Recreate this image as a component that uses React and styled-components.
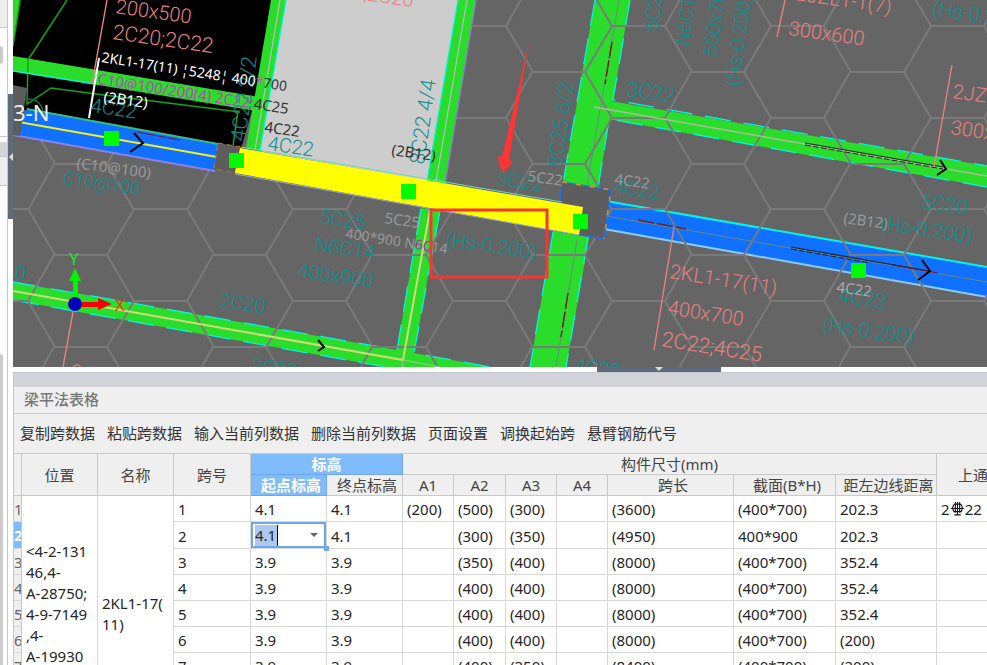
import React from 'react';
import styled, { createGlobalStyle } from 'styled-components';

const Global = createGlobalStyle`
  * { box-sizing: border-box; }
  html, body, #root { height: 100%; }
  body {
    margin: 0;
    overflow: hidden;
    background: #fff;
    color: #262626;
    font: 15px/21px 'Noto Sans', 'Noto Sans CJK SC', sans-serif;
  }
`;

const Page = styled.div`
  display: grid;
  grid-template-columns: 13px minmax(0, 1fr);
  height: 100vh;
  overflow: hidden;
`;

const Rail = styled.aside`
  display: grid;
  grid-template-columns: 8px 5px;
`;

const RailPane = styled.div`
  display: flex;
  flex-direction: column;
  border-right: 1px solid #c4c8cc;
`;

const RailBlock = styled.div`
  height: ${(p) => p.$h}px;
  background: ${(p) => p.$bg || '#fff'};
  border-bottom: ${(p) => (p.$line ? '1px solid #c4c6ca' : '0')};
`;

const RailThumb = styled.div`
  width: 3px;
  height: ${(p) => p.$h}px;
  flex: ${(p) => (p.$grow ? '1' : 'none')};
  background: #cbcbcb;
  border-radius: 0 3px 0 0;
  border-bottom-right-radius: ${(p) => (p.$grow ? 0 : 3)}px;
`;

const RailGutter = styled.div`
  padding-top: 94px;
`;

const RailToggle = styled.button`
  display: flex;
  align-items: center;
  width: 5px;
  height: 125px;
  padding: 0;
  border: 0;
  background: #5f6b78;
`;

const Main = styled.main`
  display: flex;
  flex-direction: column;
  min-width: 0;
`;

const Viewport = styled.section`
  height: 367px;
  flex: none;
  background: #656565;
  overflow: hidden;
`;

const Drawing = styled.svg`
  display: block;
  width: 100%;
  height: 100%;
`;

const Splitter = styled.div`
  display: flex;
  justify-content: center;
  height: 5px;
  flex: none;
  padding-left: 318px;
`;

const SplitterToggle = styled.button`
  display: flex;
  justify-content: center;
  width: 124px;
  padding: 0;
  border: 0;
  background: #5f6b78;
`;

const Panel = styled.section`
  flex: 1;
  min-height: 0;
  overflow: hidden;
  background: #efefef;
  border-left: 1px solid #c4c8cc;
`;

const PanelStrip = styled.div`
  height: 15px;
  background: #d3d4da;
  border-top: 1px solid #c4c8cc;
`;

const PanelTitle = styled.h2`
  margin: 0;
  height: 27px;
  padding: 2px 10px;
  border-bottom: 1px solid #c8ccd0;
  color: #777;
  font-size: 15px;
  font-weight: 500;
`;

const Toolbar = styled.div`
  display: flex;
  align-items: center;
  gap: 12px;
  height: 39px;
  padding: 0 6px;
`;

const ToolButton = styled.button`
  padding: 0;
  border: 0;
  background: none;
  color: #333;
  font: inherit;
  white-space: nowrap;
`;

const Grid = styled.table`
  width: 1026px;
  min-width: 100%;
  table-layout: fixed;
  border-collapse: separate;
  border-spacing: 0;
  border-top: 1px solid #c9c9c9;
  background: #fff;
`;

const Col = styled.col`
  width: ${(p) => p.$w}px;
`;

const Head = styled.th`
  height: 21px;
  padding: 0;
  border-right: 1px solid ${(p) => (p.$active ? '#6fa8ea' : '#c9c9c9')};
  border-bottom: 1px solid ${(p) => (p.$active ? '#6fa8ea' : '#c9c9c9')};
  background: ${(p) => (p.$active ? '#80bbfb' : '#efefef')};
  color: ${(p) => (p.$active ? '#fff' : '#444')};
  font-weight: ${(p) => (p.$active ? 700 : 400)};
  line-height: 20px;
  padding-left: ${(p) => (p.$right ? 5 : 0)}px;
  white-space: nowrap;
`;

const RowHead = styled.th`
  height: 26px;
  padding: 1px 0 0;
  overflow: hidden;
  border-right: 1px solid #c9c9c9;
  border-bottom: 1px solid #d8d8d8;
  background: ${(p) => (p.$active ? '#80bbfb' : '#efefef')};
  color: ${(p) => (p.$active ? '#fff' : '#666')};
  font-weight: ${(p) => (p.$active ? 700 : 400)};
  text-align: left;
`;

const Cell = styled.td`
  height: 26px;
  padding: 2px 4px 0;
  border-right: 1px solid #d8d8d8;
  border-bottom: 1px solid #d8d8d8;
  white-space: ${(p) => (p.$wrap ? 'pre-line' : 'nowrap')};
`;

const EditCell = styled(Cell)`
  position: relative;
  padding: 0;
`;

const Editor = styled.div`
  display: flex;
  align-items: center;
  justify-content: space-between;
  height: 26px;
  padding: 0 6px 0 2px;
  border: 2px solid #6fa8ea;
`;

const EditorInput = styled.input`
  width: 23px;
  height: 21px;
  padding: 0;
  border: 0;
  border-right: 1px solid #000;
  border-radius: 0;
  outline: 0;
  background: #adc9ef;
  color: inherit;
  font: inherit;
`;

const EditorButton = styled.button`
  display: flex;
  padding: 0;
  border: 0;
  background: none;
`;

const FillHandle = styled.span`
  position: absolute;
  right: -3px;
  bottom: -3px;
  width: 5px;
  height: 5px;
  background: #6fa8ea;
`;

const Rebar = styled.span`
  display: inline-flex;
  align-items: center;
  line-height: 19px;
`;

const TEAL = '#0f8f8f';
const SALMON = '#e98080';
const GREEN = '#2bdd2b';
const CYAN = '#00f5e4';

function hexPath() {
  let d = '';
  for (let c = -1; c < 7; c += 1) {
    for (let r = -1; r < 5; r += 1) {
      const x = Math.round(54 + c * 159.3);
      const y = Math.round(72 + r * 91.6);
      d += `M${x} ${y}h53l27-46h53l27 46M${x + 53} ${y}l27 46M${x + 133} ${y + 46}l26-46`;
    }
  }
  return d;
}

// [text, x, y, rotation, fill, size]
const notes = [
  ['200x500', 115, 13, 8, SALMON, 20],
  ['2C20;2C22', 112, 39, 8, SALMON, 21],
  ['300x600', 788, 35, 8, SALMON, 20],
  ['2JZL1-1(7)', 795, 0, 8, SALMON, 20],
  ['2JZL1', 952, 98, 8, SALMON, 20],
  ['300x600', 950, 134, 8, SALMON, 20],
  ['2KL1-17(11)', 669, 278, 9, SALMON, 20],
  ['400x700', 667, 314, 9, SALMON, 20],
  ['2C22;4C25', 661, 346, 9, SALMON, 21],
  [';2C20', 363, 0, 8, SALMON, 20],
  ['2JZ', 70, 378, 8, SALMON, 20],
  ['4C22', 90, 112, 8, TEAL, 20],
  ['4C22', 267, 150, 8, TEAL, 20],
  ['C10@100', 62, 184, 8, TEAL, 18],
  ['4C22 2/2', 245, 142, -82, TEAL, 21],
  ['8C22 4/4', 424, 165, -82, TEAL, 21],
  ['8C25 6/2', 562, 168, -82, TEAL, 21],
  ['5C22', 496, 185, 8, TEAL, 20],
  ['3C22', 626, 96, 8, TEAL, 21],
  ['4C22', 613, 193, 8, TEAL, 20],
  ['6C25', 658, 32, -82, TEAL, 20],
  ['N6C14', 689, 47, -82, TEAL, 20],
  ['500x700', 717, 57, -82, TEAL, 20],
  ['(Hs-0.200)', 739, 87, -82, TEAL, 20],
  ['(Hs-0.200)', 932, 15, 8, TEAL, 20],
  ['5C20', 921, 208, 8, TEAL, 20],
  ['(Hs-0.200)', 880, 230, 8, TEAL, 20],
  ['4C22', 838, 302, 8, TEAL, 21],
  ['(Hs-0.200)', 822, 331, 8, TEAL, 20],
  ['5C25', 319, 223, 8, TEAL, 20],
  ['N6C14', 314, 251, 8, TEAL, 20],
  ['400x900', 297, 277, 8, TEAL, 20],
  ['(Hs-0.200)', 445, 246, 8, TEAL, 20],
  ['2C20', 219, 307, 8, TEAL, 20],
  ['2C20', 251, 372, 8, TEAL, 20],
  ['4C22', 574, 372, 8, TEAL, 20],
  ['0', 14, 279, 8, TEAL, 20],
];

const labels = [
  ['(C10@100)', 76, 168, 8, '#999'],
  ['5C22', 527, 181, 8, '#999'],
  ['4C22', 614, 184, 8, '#999'],
  ['(2B12)', 843, 223, 8, '#999'],
  ['4C22', 836, 292, 8, '#aaa'],
  ['5C25', 384, 223, 8, '#999'],
  ['(2B12)', 391, 155, 8, '#333'],
  ['(2B12)', 103, 102, 8, '#fff'],
  ['4C22', 264, 132, 8, '#333'],
];

const grips = [[104, 131], [229, 153], [401, 184], [573, 214], [851, 263]];

function Note({ data, size }) {
  const [text, x, y, rot, fill, own] = data;
  return (
    <text transform={`translate(${x} ${y}) rotate(${rot})`} fill={fill} fontSize={own || size}>
      {text}
    </text>
  );
}

function Plan() {
  return (
    <Drawing viewBox="13 0 974 367" preserveAspectRatio="xMinYMin slice" role="img" aria-label="梁平面图">
      <g>
        <path d="M610 101L987 166V187L608 119zM13 282L397 350 421 208 440 211 414 353 490 367H386L13 300z" fill={GREEN} />
        <path d="M595 0H630L598 188 566 367H530L553 232 563 183z" fill={GREEN} />
        <path d="M606 201L987 267V297L604 229z" fill="#1070ff" />
        <g fill="none" stroke={CYAN} strokeWidth="1.3">
          <path d="M595 0L563 183M553 232L530 367M588 238L566 367M630 0L613 100 987 166M598 188L609 119 987 187M13 282L397 350 421 208M440 211L414 353 490 367M13 300L386 367" strokeDasharray="26 13" />
          <path d="M606 201L987 267" strokeWidth="2" />
        </g>
        <path d="M604 229L987 297" stroke="#8ecbff" strokeWidth="2" />
        <path d={hexPath()} fill="none" stroke="#7a7a7a" strokeWidth="2" />
      </g>
      <path d="M13 0H283L241 149 13 108z" fill="#000" />
      <path d="M286 0H458L428 181 259 151z" fill="#cdcdcd" />
      <g fill={GREEN}>
        <path d="M13 56L265 98 262 112 13 71z" />
        <path d="M271 0H286L260 151 246 148z" />
        <path d="M458 0H476L445 184 427 181z" />
        <path d="M13 0H20L13 46z" />
      </g>
      <path d="M20 0L13 46M67 0L28 60 27 104 51 88 96 94 240 112M238 110L233 146" fill="none" stroke="#14a414" strokeWidth="1.5" />
      <circle cx="29" cy="113" r="14" fill="none" stroke="#126d25" strokeWidth="1.5" />
      <path d="M13 71L95 84M286 0L260 151M458 0L427 181" stroke={CYAN} strokeWidth="1.3" />
      <path d="M280 0L255 150M467 0L436 182" stroke="#bdbdbd" strokeWidth="1.2" />
      <path d="M476 0L445 184" stroke="#8f79ce" strokeWidth="1.4" />
      <path d="M27 109L218 144 215 170 13 135z" fill="#1070ff" />
      <path d="M27 109L218 144" stroke="#35bd84" strokeWidth="2" />
      <path d="M13 135L215 171" stroke="#8a82ec" strokeWidth="2" />
      <path d="M13 121L217 157" stroke="#f1ed28" strokeWidth="2" />
      <path d="M137 132L180 140" stroke="#69105b" />
      <path d="M134 133L143 143 130 152" fill="none" stroke="#000" strokeWidth="2" />
      <path d="M13 85L27 88 20 136 13 135z" fill="#5d5d5d" />
      <path d="M218 143L241 147 235 173 214 169z" fill="#5d5d5d" stroke="#be704c" strokeDasharray="5 4" />
      <path d="M562 182L611 190 604 239 556 231z" fill="#5d5d5d" stroke="#216ee5" strokeWidth="1.5" />
      <path d="M562 182L611 190 604 239" fill="none" stroke="#e38b36" strokeWidth="1.5" strokeDasharray="5 9" />
      <path d="M240 148L583 207 579 235 235 173z" fill="#ff0" />
      <path d="M241 147L562 202" stroke="#65d7cf" />
      <path d="M235 174L579 235" stroke="#98a7df" />
      <path d="M13 291L403 360 430 210" fill="none" stroke="#d5d878" strokeWidth="2" />
      <path d="M403 360L440 367M403 360L402 367" stroke="#aebf93" />
      <path d="M619 0L587 185M577 240L556 367M606 216L987 282" stroke="#6c8880" />
      <path d="M594 107L987 176" stroke="#b1b99f" strokeWidth="1.5" />
      <path d="M612 42L605 84M568 293L561 337M638 220L686 229" stroke="#761f20" strokeWidth="1.5" strokeDasharray="16 3" />
      <path d="M805 143L943 167M791 247L929 271" stroke="#222" strokeWidth="1.2" />
      <path d="M805 145L943 169M791 249L870 263" stroke="#222" strokeDasharray="6 2" />
      <path d="M892 265L938 273" stroke="#6b1425" />
      <path d="M940 160L946 169 937 175M922 260L930 271 918 280M318 340L324 347 318 351" fill="none" stroke="#000" strokeWidth="2" />
      <path d="M107 0L92 84M785 0L777 37M952 65L934 167M674 227L654 350M73 312L63 367" stroke={SALMON} strokeWidth="1.4" />
      <path d="M99 58L89 118" stroke="#fff" strokeWidth="2" />
      <g fontFamily="Roboto, 'Open Sans', sans-serif" fontWeight="300">
        {notes.map((n) => <Note key={`${n[0]}-${n[1]}-${n[2]}`} data={n} />)}
      </g>
      <g fontFamily="'Noto Sans', sans-serif">
        {labels.map((n) => <Note key={`${n[0]}-${n[1]}`} data={n} size={15} />)}
        <text transform="translate(97 84) rotate(9)" fontSize="15" fill="#bd43bd">
          C10@100/200(4) 2C22;<tspan fill="#333">4C25</tspan>
        </text>
        <text transform="translate(101 62) rotate(9)" fontSize="14" fill="#fff">
          2KL1-17(11) ¦5248¦ 400<tspan fill="#d04bd0">*</tspan><tspan fill="#333">700</tspan>
        </text>
        <text transform="translate(345 238) rotate(9)" fontSize="14" fill="#999">
          400*900 N<tspan fill="#c01cc0">6C</tspan>14
        </text>
        <text x="13" y="121" fontSize="22" fill="#eee">3-N</text>
        <text x="69" y="265" fontSize="17" fill="#22e322">Y</text>
        <text x="115" y="311" fontSize="17" fill="#ff3500">X</text>
      </g>
      <path d="M73 298V281H69L75 268 81 281H78V298z" fill="#00f300" />
      <path d="M82 302H98V298L112 304 98 310V307H82z" fill="#f40000" />
      <circle cx="75" cy="304" r="7" fill="#0000ba" />
      {grips.map(([x, y]) => <rect key={x} x={x} y={y} width="15" height="15" fill="#00fa00" />)}
      <path d="M529 42L509 160 513 161 503 174 497 156 502 157z" fill="#ff3535" />
      <rect x="431" y="210" width="116" height="67" fill="none" stroke="#fa3434" strokeWidth="3" />
    </Drawing>
  );
}

const columns = [8, 76, 76, 77, 76, 76, 51, 52, 51, 51, 126, 102, 101, 103];
const actions = ['复制跨数据', '粘贴跨数据', '输入当前列数据', '删除当前列数据', '页面设置', '调换起始跨', '悬臂钢筋代号'];

const rows = [
  ['4.1', '4.1', '(200)', '(500)', '(300)', '', '(3600)', '(400*700)', '202.3'],
  ['4.1', '4.1', '', '(300)', '(350)', '', '(4950)', '400*900', '202.3'],
  ['3.9', '3.9', '', '(350)', '(400)', '', '(8000)', '(400*700)', '352.4'],
  ['3.9', '3.9', '', '(400)', '(400)', '', '(8000)', '(400*700)', '352.4'],
  ['3.9', '3.9', '', '(400)', '(400)', '', '(8000)', '(400*700)', '352.4'],
  ['3.9', '3.9', '', '(400)', '(400)', '', '(8000)', '(400*700)', '(200)'],
  ['3.9', '3.9', '', '(400)', '(350)', '', '(8400)', '(400*700)', '(200)'],
  ['', '', '', '', '', '', '', '', ''],
  ['', '', '', '', '', '', '', '', ''],
];

function SpanEditor() {
  return (
    <EditCell>
      <Editor>
        <EditorInput aria-label="起点标高" defaultValue="4.1" />
        <EditorButton aria-label="展开">
          <svg width="8" height="5" viewBox="0 0 8 5"><path d="M0 0H8L4 4z" fill="#666" /></svg>
        </EditorButton>
      </Editor>
      <FillHandle />
    </EditCell>
  );
}

function SpanTable() {
  return (
    <Grid>
      <colgroup>{columns.map((w, i) => <Col key={i} $w={w} />)}</colgroup>
      <thead>
        <tr>
          <Head rowSpan={2} />
          <Head rowSpan={2}>位置</Head>
          <Head rowSpan={2}>名称</Head>
          <Head rowSpan={2}>跨号</Head>
          <Head colSpan={2} $active>标高</Head>
          <Head colSpan={7}>构件尺寸(mm)</Head>
          <Head rowSpan={2}>上通长筋</Head>
        </tr>
        <tr>
          <Head $active $right>起点标高</Head>
          <Head $right>终点标高</Head>
          <Head>A1</Head>
          <Head>A2</Head>
          <Head>A3</Head>
          <Head>A4</Head>
          <Head $right>跨长</Head>
          <Head $right>截面(B*H)</Head>
          <Head $right>距左边线距离</Head>
        </tr>
      </thead>
      <tbody>
        {rows.map((row, r) => (
          <tr key={r}>
            <RowHead $active={r === 1}>{r + 1}</RowHead>
            {r === 0 && <Cell rowSpan={9} $wrap>{' <4-2-131\n46,4-\nA-28750;\n4-9-7149\n,4-\nA-19930\n>'}</Cell>}
            {r === 0 && <Cell rowSpan={9} $wrap>{'2KL1-17(\n11)'}</Cell>}
            <Cell>{r + 1}</Cell>
            {row.map((value, c) => (r === 1 && c === 0 ? <SpanEditor key={c} /> : <Cell key={c}>{value}</Cell>))}
            <Cell>
              {r === 0 && (
                <Rebar>
                  2
                  <svg width="15" height="15" viewBox="0 0 14 14" aria-label="三级钢" fill="none" stroke="#111">
                    <path d="M4 2Q1 6 4 9M10 2Q13 6 10 9M4 2H10M5 0V10M7 0V12M9 0V10M1 6H13M3 9H11M4 12H10" />
                  </svg>
                  22
                </Rebar>
              )}
            </Cell>
          </tr>
        ))}
      </tbody>
    </Grid>
  );
}

export default function App() {
  return (
    <>
      <Global />
      <Page>
        <Rail>
          <RailPane>
            <RailBlock $h={28} $bg="#eee" $line />
            <RailBlock $h={18} />
            <RailThumb $h={18} />
            <RailBlock $h={73} $line />
            <RailBlock $h={5} />
            <RailBlock $h={15} $bg="#d3d4da" $line />
            <RailBlock $h={29} $bg="#eee" $line />
            <RailBlock $h={168} />
            <RailThumb $grow />
          </RailPane>
          <RailGutter>
            <RailToggle aria-label="收起侧栏">
              <svg width="5" height="8" viewBox="0 0 5 8"><path d="M1 4L5 0V8z" fill="#ddd" /></svg>
            </RailToggle>
          </RailGutter>
        </Rail>
        <Main>
          <Viewport><Plan /></Viewport>
          <Splitter>
            <SplitterToggle aria-label="收起表格">
              <svg width="8" height="4" viewBox="0 0 8 4"><path d="M0 0H8L4 4z" fill="#ddd" /></svg>
            </SplitterToggle>
          </Splitter>
          <Panel>
            <PanelStrip />
            <PanelTitle>梁平法表格</PanelTitle>
            <Toolbar>{actions.map((a) => <ToolButton key={a}>{a}</ToolButton>)}</Toolbar>
            <SpanTable />
          </Panel>
        </Main>
      </Page>
    </>
  );
}
